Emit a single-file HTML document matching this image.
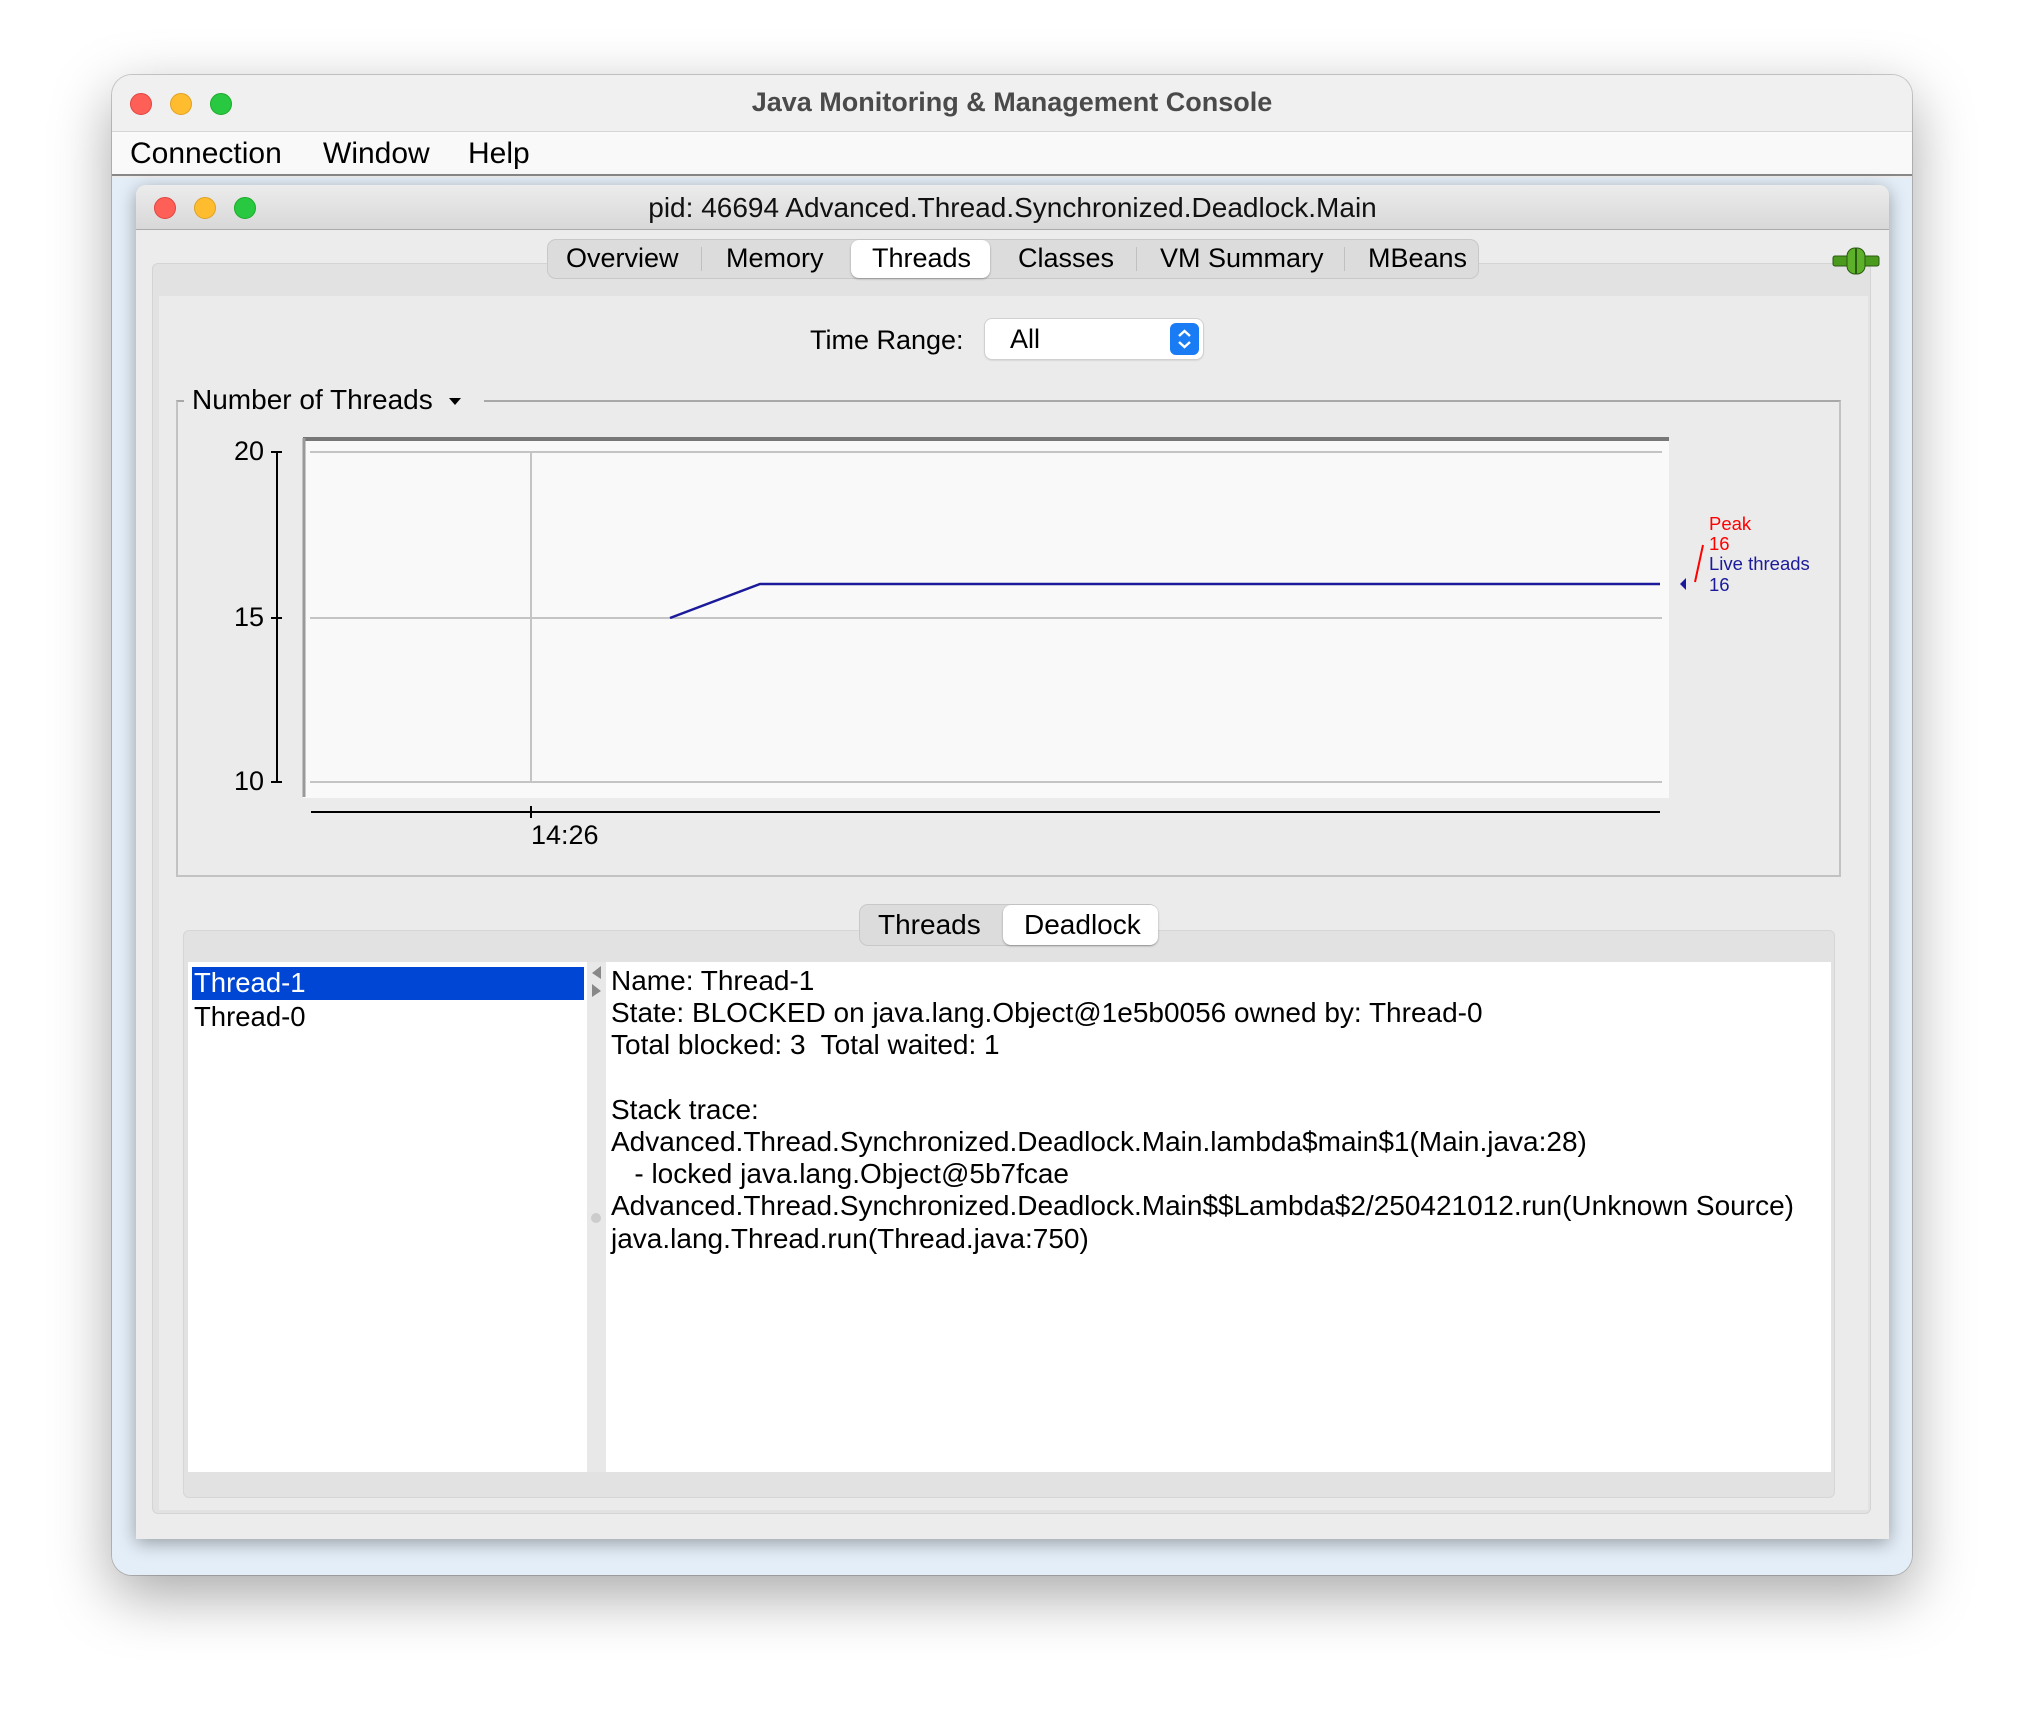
<!DOCTYPE html>
<html><head><meta charset="utf-8"><style>
*{margin:0;padding:0;box-sizing:border-box}
body{width:2024px;height:1724px;background:#fff;position:relative;overflow:hidden;font-family:"Liberation Sans","DejaVu Sans",sans-serif;color:#000}
.a{position:absolute}
.t{position:absolute;white-space:nowrap;line-height:1}
.dot{position:absolute;width:22px;height:22px;border-radius:50%}
</style></head><body>
<div class="a" style="left:112px;top:75px;width:1800px;height:1500px;border-radius:20px;background:#ececec;box-shadow:0 20px 60px rgba(0,0,0,.35),0 0 0 1px rgba(0,0,0,.18);overflow:hidden">
  <div class="a" style="left:0;top:0;width:1800px;height:57px;background:#f0f0f0;border-bottom:1px solid #d6d6d6"></div>
  <div class="dot" style="left:18px;top:18px;background:#fe5f57;border:1px solid #e0443e"></div>
  <div class="dot" style="left:58px;top:18px;background:#febc2e;border:1px solid #dea123"></div>
  <div class="dot" style="left:98px;top:18px;background:#28c840;border:1px solid #1aab29"></div>
  <div class="t" style="left:0;width:1800px;text-align:center;top:14px;font-size:27px;font-weight:bold;color:#4a4a4a">Java Monitoring &amp; Management Console</div>
  <div class="a" style="left:0;top:57px;width:1800px;height:44px;background:#f9f9f9;border-bottom:2px solid #888"></div>
  <div class="t" style="left:18px;top:64px;font-size:30px">Connection</div>
  <div class="t" style="left:211px;top:64px;font-size:30px">Window</div>
  <div class="t" style="left:356px;top:64px;font-size:30px">Help</div>
  <div class="a" style="left:0;top:103px;width:1800px;height:1397px;background:#e4eef8"></div>
</div>
<div class="a" style="left:136px;top:185px;width:1753px;height:1354px;background:#ececec;border-radius:10px 10px 0 0;box-shadow:0 4px 18px rgba(0,0,0,.35);overflow:hidden">
  <div class="a" style="left:0;top:0;width:1753px;height:45px;background:linear-gradient(#ececec,#d8d8d8);border-bottom:1px solid #aaa"></div>
  <div class="dot" style="left:18px;top:12px;background:#fe5f57;border:1px solid #e0443e"></div>
  <div class="dot" style="left:58px;top:12px;background:#febc2e;border:1px solid #dea123"></div>
  <div class="dot" style="left:98px;top:12px;background:#28c840;border:1px solid #1aab29"></div>
  <div class="t" style="left:0;width:1753px;text-align:center;top:9px;font-size:28px;color:#111">pid: 46694 Advanced.Thread.Synchronized.Deadlock.Main</div>
</div>
<div class="a" style="left:152px;top:263px;width:1719px;height:1251px;background:#e2e2e2;border:1px solid #d4d4d4;border-radius:6px"></div>
<div class="a" style="left:159px;top:296px;width:1709px;height:1214px;background:#ebebeb"></div>
<div class="a" style="left:547px;top:239px;width:932px;height:40px;background:#dcdcdc;border:1px solid #c8c8c8;border-radius:9px"></div>
<div class="a" style="left:851px;top:240px;width:139px;height:38px;background:#fff;border-radius:8px;box-shadow:0 1px 2px rgba(0,0,0,.3)"></div>
<div class="a" style="left:701px;top:247px;width:1px;height:24px;background:#c0c0c0"></div>
<div class="a" style="left:1136px;top:247px;width:1px;height:24px;background:#c0c0c0"></div>
<div class="a" style="left:1344px;top:247px;width:1px;height:24px;background:#c0c0c0"></div>
<div class="t" style="left:566px;top:245px;font-size:27px">Overview</div>
<div class="t" style="left:726px;top:245px;font-size:27px">Memory</div>
<div class="t" style="left:872px;top:245px;font-size:27px">Threads</div>
<div class="t" style="left:1018px;top:245px;font-size:27px">Classes</div>
<div class="t" style="left:1160px;top:245px;font-size:27px">VM Summary</div>
<div class="t" style="left:1368px;top:245px;font-size:27px">MBeans</div>
<svg class="a" style="left:1832px;top:246px" width="48" height="30" viewBox="0 0 48 30"><rect x="1" y="10" width="46" height="10" rx="2" fill="#4a9a1e" stroke="#2a5a10"/><rect x="15" y="2" width="18" height="26" rx="8" fill="#5cb02a" stroke="#2a5a10"/><line x1="24" y1="2" x2="24" y2="28" stroke="#2a5a10" stroke-width="2"/></svg>
<div class="t" style="left:810px;top:327px;font-size:27px">Time Range:</div>
<div class="a" style="left:985px;top:319px;width:218px;height:40px;background:#fff;border-radius:7px;box-shadow:0 0 0 1px #d0d0d0,0 1px 2px rgba(0,0,0,.2)"></div>
<div class="t" style="left:1010px;top:326px;font-size:27px">All</div>
<div class="a" style="left:1170px;top:323px;width:29px;height:32px;background:#1a7cf5;border-radius:6px"></div>
<svg class="a" style="left:1170px;top:323px" width="29" height="32"><path d="M9 13 L14.5 8 L20 13 M9 19 L14.5 24 L20 19" fill="none" stroke="#fff" stroke-width="2.4"/></svg>
<div class="a" style="left:176px;top:400px;width:1665px;height:477px;border:2px solid #c2c2c2;border-top:2px solid #a8a8a8"></div>
<div class="a" style="left:184px;top:386px;width:300px;height:30px;background:#ebebeb"></div>
<div class="t" style="left:192px;top:386px;font-size:28px">Number of Threads</div>
<svg class="a" style="left:448px;top:396px" width="14" height="10"><path d="M1 2 L13 2 L7 9 Z" fill="#000"/></svg>
<svg class="a" style="left:0;top:0" width="2024" height="900">
  <rect x="303" y="438" width="1366" height="360" fill="#f9f9f9"/>
  <line x1="303" y1="439" x2="1669" y2="439" stroke="#777" stroke-width="4"/>
  <line x1="304" y1="438" x2="304" y2="797" stroke="#999" stroke-width="3"/>
  <g stroke="#c4c4c4" stroke-width="2"><line x1="310" y1="452" x2="1662" y2="452"/><line x1="310" y1="618" x2="1662" y2="618"/><line x1="310" y1="782" x2="1662" y2="782"/><line x1="531" y1="452" x2="531" y2="782"/></g>
  <g stroke="#000" stroke-width="2"><line x1="277" y1="452" x2="277" y2="782"/><line x1="271" y1="452" x2="282" y2="452"/><line x1="271" y1="618" x2="282" y2="618"/><line x1="271" y1="782" x2="282" y2="782"/><line x1="311" y1="812" x2="1660" y2="812"/><line x1="531" y1="806" x2="531" y2="818"/></g>
  <polyline points="670,618 760,584 1660,584" fill="none" stroke="#1a1a9a" stroke-width="2.5"/>
  <path d="M1686 578 L1680 584 L1686 590 Z" fill="#1a1a9a"/>
  <line x1="1703" y1="545" x2="1695" y2="582" stroke="#f00" stroke-width="2"/>
  <g font-family="Liberation Sans,sans-serif" font-size="27" text-anchor="end"><text x="264" y="460">20</text><text x="264" y="626">15</text><text x="264" y="790">10</text></g>
  <text x="531" y="844" font-family="Liberation Sans,sans-serif" font-size="27">14:26</text>
  <g font-family="Liberation Sans,sans-serif" font-size="18.5"><text x="1709" y="530" fill="#f00">Peak</text><text x="1709" y="550" fill="#f00">16</text><text x="1709" y="570" fill="#1a1a9a">Live threads</text><text x="1709" y="591" fill="#1a1a9a">16</text></g>
</svg>
<div class="a" style="left:183px;top:930px;width:1652px;height:568px;background:#e2e2e2;border:1px solid #d6d6d6;border-radius:6px"></div>
<div class="a" style="left:859px;top:904px;width:299px;height:42px;background:#dcdcdc;border:1px solid #c8c8c8;border-radius:9px"></div>
<div class="a" style="left:1003px;top:905px;width:155px;height:40px;background:#fff;border-radius:8px;box-shadow:0 1px 2px rgba(0,0,0,.3)"></div>
<div class="t" style="left:878px;top:911px;font-size:28px">Threads</div>
<div class="t" style="left:1024px;top:911px;font-size:28px">Deadlock</div>
<div class="a" style="left:188px;top:962px;width:399px;height:510px;background:#fff"></div>
<div class="a" style="left:587px;top:962px;width:19px;height:510px;background:#e8e8e8"></div>
<svg class="a" style="left:587px;top:962px" width="19" height="270"><path d="M14 4 L5 11 L14 17 Z M5 22 L14 29 L5 35 Z" fill="#888"/><circle cx="9" cy="256" r="5" fill="#ccc"/></svg>
<div class="a" style="left:606px;top:962px;width:1225px;height:510px;background:#fff"></div>
<div class="a" style="left:192px;top:967px;width:392px;height:33px;background:#0046d4"></div>
<div class="t" style="left:194px;top:969px;font-size:27.5px;color:#fff">Thread-1</div>
<div class="t" style="left:194px;top:1003px;font-size:27.5px">Thread-0</div>
<div class="a" style="left:611px;top:965px;font-size:28px;line-height:32.2px;white-space:pre">Name: Thread-1
State: BLOCKED on java.lang.Object@1e5b0056 owned by: Thread-0
Total blocked: 3  Total waited: 1

Stack trace: 
Advanced.Thread.Synchronized.Deadlock.Main.lambda$main$1(Main.java:28)
   - locked java.lang.Object@5b7fcae
Advanced.Thread.Synchronized.Deadlock.Main$$Lambda$2/250421012.run(Unknown Source)
java.lang.Thread.run(Thread.java:750)</div>
</body></html>
